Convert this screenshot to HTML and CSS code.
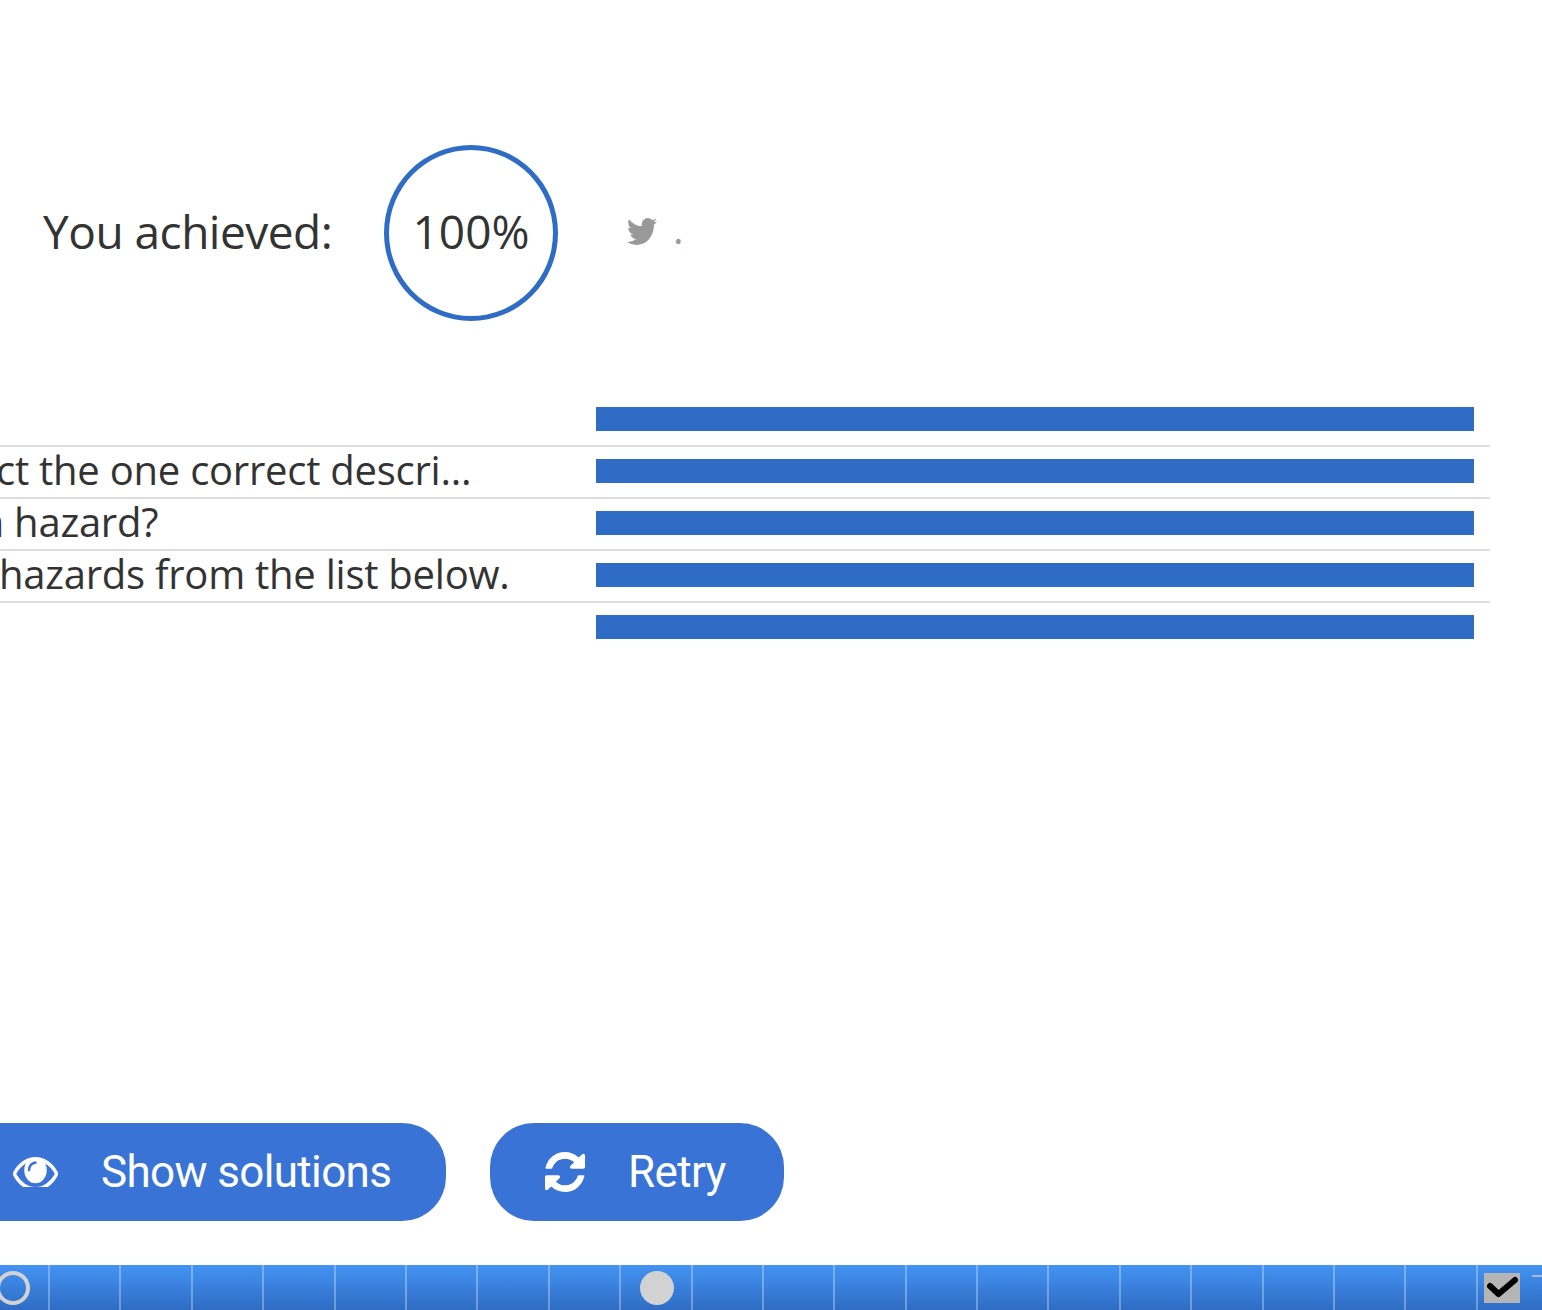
FILE: index.html
```html
<!DOCTYPE html>
<html lang="en">
<head>
    <meta charset="UTF-8">
    <meta name="viewport" content="width=device-width, initial-scale=1.0">
    <title>Summary</title>
    <link rel="stylesheet" href="styles.css">
</head>
<body>
    <div class="score">
        <span class="score-label">You achieved:</span>
        <div class="score-circle"><span class="score-value">100%</span></div>
        <div class="share">
            <svg class="twitter" viewBox="108 256 1576 1280" preserveAspectRatio="none"><path d="M1684 408q-67 98-162 167 1 14 1 42 0 130-38 259.5t-115.5 248.5-184.5 210.5-258 146-323 54.5q-271 0-496-145 35 4 78 4 225 0 401-138-105-2-188-64.5t-114-159.5q33 5 61 5 43 0 85-11-112-23-185.5-111.5t-73.5-205.5v-4q68 38 146 41-66-44-105-115t-39-154q0-88 44-163 121 149 294.5 238.5t371.5 99.5q-8-38-8-74 0-134 94.5-228.5t228.5-94.5q140 0 236 102 109-21 205-78-37 115-142 181 89-12 178-50z"/></svg>
            <span class="share-dot">.</span>
        </div>
    </div>

    <div class="results">
        <div class="row">
            <div class="row-text"></div>
            <div class="bar"></div>
        </div>
        <div class="row">
            <div class="row-text"><span class="cut-first">ct the one correct descri...</span></div>
            <div class="bar"></div>
        </div>
        <div class="row">
            <div class="row-text"><span class="cut-word">a hazard?</span></div>
            <div class="bar"></div>
        </div>
        <div class="row">
            <div class="row-text"><span class="cut-last">hazards from the list below.</span></div>
            <div class="bar"></div>
        </div>
        <div class="row">
            <div class="row-text"></div>
            <div class="bar"></div>
        </div>
    </div>

    <div class="buttons">
        <button class="btn btn-solutions">
            <svg class="eye" viewBox="0 384 1792 1024" preserveAspectRatio="none"><path d="M1664 960q-152-236-381-353 61 104 61 225 0 185-131.5 316.5t-316.5 131.5-316.5-131.5-131.5-316.5q0-121 61-225-229 117-381 353 133 205 333.5 326.5t434.5 121.5 434.5-121.5 333.5-326.5zm-720-384q0-20-14-34t-34-14q-125 0-214.5 89.5t-89.5 214.5q0 20 14 34t34 14 34-14 14-34q0-86 61-147t147-61q20 0 34-14t14-34zm848 384q0 34-20 69-140 230-376.5 368.5t-499.5 138.5-499.5-139-376.5-368q-20-35-20-69t20-69q140-229 376.5-368t499.5-139 499.5 139 376.5 368q20 35 20 69z"/></svg>
            Show solutions
        </button>
        <button class="btn btn-retry">
            <svg class="refresh" viewBox="128 128 1536 1536"><path d="M1639 1056q0 5-1 7-64 268-268 434.5t-478 166.5q-146 0-282.5-55t-243.5-157l-129 129q-19 19-45 19t-45-19-19-45v-448q0-26 19-45t45-19h448q26 0 45 19t19 45-19 45l-137 137q71 66 161 102t187 36q134 0 250-65t186-179q11-17 53-117 8-23 30-23h192q13 0 22.5 9.5t9.5 22.5zm25-800v448q0 26-19 45t-45 19h-448q-26 0-45-19t-19-45 19-45l138-138q-148-137-349-137-134 0-250 65t-186 179q-11 17-53 117-8 23-30 23h-199q-13 0-22.5-9.5t-9.5-22.5v-7q65-268 270-434.5t480-166.5q146 0 284 55.5t245 156.5l130-129q19-19 45-19t45 19 19 45z"/></svg>
            Retry
        </button>
    </div>

    <div class="timeline">
        <div class="ring"></div>
        <div class="ticks">
            <div class="tick"></div>
            <div class="tick"></div>
            <div class="tick"></div>
            <div class="tick"></div>
            <div class="tick"></div>
            <div class="tick"></div>
            <div class="tick"></div>
            <div class="tick"></div>
            <div class="tick"><div class="dot"></div></div>
            <div class="tick"></div>
            <div class="tick"></div>
            <div class="tick"></div>
            <div class="tick"></div>
            <div class="tick"></div>
            <div class="tick"></div>
            <div class="tick"></div>
            <div class="tick"></div>
            <div class="tick"></div>
            <div class="tick"></div>
            <div class="tick"></div>
            <div class="tick"></div>
        </div>
        <div class="check">
            <svg viewBox="0 0 36 30"><path d="M6 13l8.500 8L31 7" fill="none" stroke="#000" stroke-width="6" stroke-linecap="round" stroke-linejoin="round"/></svg>
        </div>
        <div class="dash"></div>
    </div>
</body>
</html>
```

FILE: styles.css
```css
body { margin: 0; height: 1310px; overflow: hidden; display: flex; flex-direction: column; background: #fff; color: #333; font-family: "Open Sans", sans-serif; }

.score { display: flex; align-items: center; padding: 145px 0 0 43px; height: 176px; font-size: 46px; }
.score-label { width: 341px; letter-spacing: -0.5px; margin-bottom: 4px; }
.score-circle { width: 164px; height: 166px; border: 5px solid #2f6cc5; border-radius: 50%; display: flex; align-items: center; justify-content: center; }
.score-value { margin-bottom: 4px; }
.share { display: flex; align-items: center; margin: 0 0 4px 69px; color: #999; }
.twitter { width: 30px; height: 27px; fill: #999; }
.share-dot { font-size: 40px; line-height: 40px; margin-left: 16px; margin-top: -4px; }

.results { margin-top: 74px; width: 1490px; }
.row { display: flex; height: 50px; border-bottom: 2px solid #ddd; }
.row:last-child { border-bottom: none; }
.row-text { width: 596px; height: 50px; line-height: 46px; font-size: 40px; letter-spacing: -0.25px; white-space: nowrap; overflow: hidden; }
.cut-first { margin-left: -4px; }
.cut-word { margin-left: -18px; }
.cut-last { margin-left: -1px; }
.bar { width: 878px; height: 24px; margin-top: 12px; background: #2f6cc5; }

.buttons { display: flex; gap: 44px; margin-top: 470px; }
.btn { display: flex; align-items: center; height: 98px; border: none; border-radius: 44px; background: #3873d5; color: #fff; font-family: Roboto, sans-serif; font-size: 44px; letter-spacing: -0.65px; white-space: nowrap; padding: 0; }
.btn-solutions { width: 500px; margin-left: -54px; padding-left: 67px; }
.btn-retry { width: 294px; padding-left: 55px; }
.eye { width: 45px; height: 30px; fill: #fff; margin-right: 43px; flex: none; }
.refresh { width: 40px; height: 40px; fill: #fff; margin-right: 43px; flex: none; }

.timeline { position: relative; display: flex; height: 45px; margin-top: 44px; background: linear-gradient(#4394f3, #2f6cc4); }
.ticks { display: flex; margin-left: 48px; }
.tick { position: relative; width: 69.4px; border-left: 2px solid rgba(255, 255, 255, 0.3); }
.ring { position: absolute; left: -4px; top: 6px; width: 26px; height: 26px; border: 4px solid #d2d2d2; border-radius: 50%; }
.dot { position: absolute; left: 19px; top: 6px; width: 34px; height: 34px; border-radius: 50%; background: #d2d2d2; }
.check { position: absolute; left: 1484px; top: 8px; width: 36px; height: 30px; background: #b5b5b5; }
.check svg { display: block; width: 36px; height: 30px; }
.dash { position: absolute; left: 1532px; top: 10px; width: 10px; height: 2px; background: #a9b8cf; }
```
